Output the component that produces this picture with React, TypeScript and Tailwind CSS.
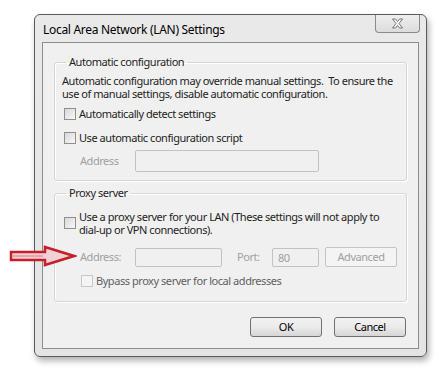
import React from "react";

const font = { fontFamily: '"Noto Sans", "Open Sans", sans-serif' };

function Check({ disabled = false }: { disabled?: boolean }) {
  return (
    <span
      className={
        "inline-block w-[12px] h-[12px] shrink-0 border " +
        (disabled
          ? "border-[#c8c8c8] bg-[#f4f4f4]"
          : "border-[#8f8f8f] bg-gradient-to-br from-[#d8d8d8] to-[#f8f8f8]")
      }
    />
  );
}

export default function App() {
  return (
    <div className="w-[441px] h-[370px] bg-white relative overflow-hidden text-[11px] tracking-[-0.45px] text-[#1e1e1e] whitespace-nowrap" style={font}>
      {/* annotation arrow */}
      <svg className="absolute left-[9px] top-[245px]" width="68" height="22" viewBox="0 0 68 22">
        <polygon
          points="2,7 36,7 36,2 65,11 36,20 36,15 2,15"
          fill="#f3d0d3"
          stroke="#c4202c"
          strokeWidth="2.5"
          strokeLinejoin="miter"
        />
        <line x1="4" y1="11" x2="34" y2="11" stroke="#c4202c" strokeWidth="1" opacity="0.5" />
      </svg>

      <div className="ml-[34px] mt-[14px] w-[393px] h-[343px] rounded-[6px] border border-[#5a5a5a] bg-gradient-to-b from-[#e9e9e9] to-[#e4e4e4] px-[7px] pb-[7px] flex flex-col shadow-[2px_4px_6px_rgba(0,0,0,0.3)]">
        <div className="h-[27px] flex items-start justify-between">
          <div className="pt-[6px] pl-[1px] text-[12px] tracking-[-0.3px] text-black">Local Area Network (LAN) Settings</div>
          <div className="w-[45px] h-[18px] -mr-[1px] border border-t-0 border-[#8a8a8a] rounded-b-[4px] bg-gradient-to-b from-[#eeeeee] to-[#dcdcdc] flex items-center justify-center">
            <svg width="13" height="11" viewBox="0 0 13 11">
              <path d="M1.5 1 L4.5 1 L6.5 3.6 L8.5 1 L11.5 1 L8 5.5 L11.5 10 L8.5 10 L6.5 7.4 L4.5 10 L1.5 10 L5 5.5 Z" fill="#f6f6f6" stroke="#6a6a6a" strokeWidth="0.9" />
            </svg>
          </div>
        </div>

        <div className="flex-1 border border-[#8c8c8c] bg-[#f0f0f0] px-[11px] flex flex-col">
          {/* Automatic configuration */}
          <fieldset className="mt-[12px] border border-[#d5d5d5] rounded-[3px] shadow-[inset_1px_1px_0_#ffffff,1px_1px_0_#ffffff] px-[7px] pb-[8px]">
            <legend className="ml-[4px] px-[3px] leading-[14px]">Automatic configuration</legend>
            <div className="mt-[5px] flex flex-col">
              <div className="h-[13px] leading-[13px]">Automatic configuration may override manual settings.&nbsp; To ensure the</div>
              <div className="h-[13px] leading-[13px]">use of manual settings, disable automatic configuration.</div>
            </div>
            <div className="flex items-center gap-[3px] mt-[7px] pl-[2px] h-[14px] leading-[14px]">
              <Check />
              <span>Automatically detect settings</span>
            </div>
            <div className="flex items-center gap-[3px] mt-[10px] pl-[2px] h-[14px] leading-[14px]">
              <Check />
              <span>Use automatic configuration script</span>
            </div>
            <div className="flex items-center mt-[5px] pl-[18px]">
              <span className="w-[55px] text-[#a0a0a0]">Address</span>
              <div className="w-[184px] h-[22px] border border-[#c2c2c2] rounded-[2px] bg-[#f0f0f0]" />
            </div>
          </fieldset>

          {/* Proxy server */}
          <fieldset className="mt-[5px] border border-[#d5d5d5] rounded-[3px] shadow-[inset_1px_1px_0_#ffffff,1px_1px_0_#ffffff] px-[7px] pb-[13px]">
            <legend className="ml-[4px] px-[3px] leading-[14px]">Proxy server</legend>
            <div className="flex items-center gap-[3px] mt-[10px] pl-[2px]">
              <Check />
              <div className="flex flex-col">
                <div className="h-[13px] leading-[13px]">Use a proxy server for your LAN (These settings will not apply to</div>
                <div className="h-[13px] leading-[13px]">dial-up or VPN connections).</div>
              </div>
            </div>
            <div className="flex items-center mt-[11px] pl-[18px] h-[20px]">
              <span className="w-[55px] text-[#a0a0a0]">Address:</span>
              <div className="w-[87px] h-[19px] border border-[#c2c2c2] rounded-[2px] bg-[#f0f0f0]" />
              <span className="ml-[15px] w-[35px] text-[#a0a0a0]">Port:</span>
              <div className="w-[47px] h-[19px] border border-[#c2c2c2] rounded-[2px] bg-[#f0f0f0] pl-[5px] text-[#a0a0a0] leading-[17px]">80</div>
              <div className="ml-[6px] w-[72px] h-[20px] border border-[#c2c4c6] rounded-[2px] bg-[#f4f4f4] text-[#a0a0a0] flex items-center justify-center">Advanced</div>
            </div>
            <div className="flex items-center gap-[3px] mt-[7px] pl-[19px] h-[14px] leading-[14px]">
              <Check disabled />
              <span className="text-[#606060]">Bypass proxy server for local addresses</span>
            </div>
          </fieldset>

          <div className="flex justify-end gap-[12px] mt-[15px] pr-[1px]">
            <div className="w-[72px] h-[20px] border border-[#707070] rounded-[3px] bg-gradient-to-b from-[#f2f2f2] via-[#ebebeb] to-[#d6d6d6] flex items-center justify-center text-black">OK</div>
            <div className="w-[72px] h-[20px] border border-[#707070] rounded-[3px] bg-gradient-to-b from-[#f2f2f2] via-[#ebebeb] to-[#d6d6d6] flex items-center justify-center text-black">Cancel</div>
          </div>
        </div>
      </div>
    </div>
  );
}
